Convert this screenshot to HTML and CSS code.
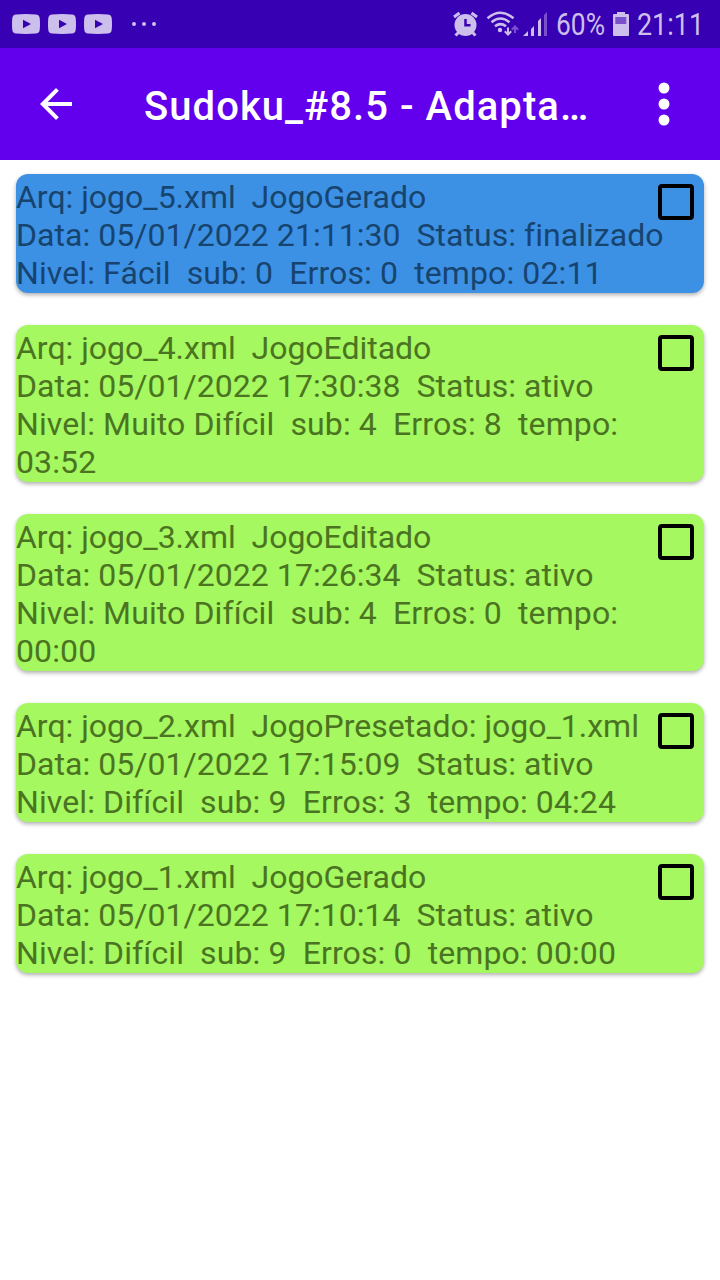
FILE: index.html
```html
<!DOCTYPE html>
<html lang="pt-BR">
<head>
<meta charset="utf-8">
<title>Sudoku_#8.5</title>
<link rel="stylesheet" href="styles.css">
</head>
<body>
<div class="status">
  <div class="notices">
    <svg class="video" viewBox="0 0 28 20"><path fill-rule="evenodd" d="M4 .4Q14-.4 24 .4 27.3.7 27.7 4 28.3 10 27.7 16 27.3 19.3 24 19.6 14 20.4 4 19.6.7 19.3.3 16-.3 10 .3 4 .7.7 4 .4ZM11 5.700v8.600l8-4.300Z"/></svg>
    <svg class="video" viewBox="0 0 28 20"><path fill-rule="evenodd" d="M4 .4Q14-.4 24 .4 27.3.7 27.7 4 28.3 10 27.7 16 27.3 19.3 24 19.6 14 20.4 4 19.6.7 19.3.3 16-.3 10 .3 4 .7.7 4 .4ZM11 5.700v8.600l8-4.300Z"/></svg>
    <svg class="video" viewBox="0 0 28 20"><path fill-rule="evenodd" d="M4 .4Q14-.4 24 .4 27.3.7 27.7 4 28.3 10 27.7 16 27.3 19.3 24 19.6 14 20.4 4 19.6.7 19.3.3 16-.3 10 .3 4 .7.7 4 .4ZM11 5.700v8.600l8-4.300Z"/></svg>
    <svg class="more" viewBox="0 0 26 4"><circle cx="2" cy="2" r="2"/><circle cx="12" cy="2" r="2"/><circle cx="22" cy="2" r="2"/></svg>
  </div>
  <svg class="indicators" viewBox="450 0 270 48">
    <g class="line">
      <path stroke-width="3" d="M454 17l5.500-4M477 17l-5.500-4M459 32l-3.500 3.500M472 32l3.500 3.500"/>
      <path stroke-width="2.500" d="M487.500 18.200Q500.500 7.200 513.500 18.200M491.500 22.300Q500.500 14.800 509.500 22.300M495 26.300Q500.500 22 506 26.300"/>
      <path stroke-width="2" d="M508 27.500V34M504.800 31.300l3.200 3.300 3.200-3.300"/>
      <path class="dim" stroke-width="2" d="M515 33V26.500M511.800 29.700l3.200-3.300 3.200 3.300"/>
    </g>
    <circle cx="465.500" cy="25" r="11"/>
    <path class="hand" d="M465.500 19v6.300h5"/>
    <circle cx="500" cy="30" r="2.200"/>
    <path d="M523 36l5-5v5ZM531 29l3-3v10h-3ZM538 21l3-3v18h-3Z"/>
    <path class="dim-fill" d="M544 15l3-3v24h-3Z"/>
    <path d="M617 12h8v2h3q1 0 1 1v20q0 1-1 1h-14q-1 0-1-1V15q0-1 1-1h3Z"/>
    <path class="level" d="M615.300 17h11v7h-11Z"/>
    <text x="556" y="35" textLength="49" lengthAdjust="spacingAndGlyphs">60%</text>
    <text x="637" y="35" textLength="67" lengthAdjust="spacingAndGlyphs">21:11</text>
  </svg>
</div>
<header class="bar">
  <svg class="back" viewBox="0 0 24 24"><path d="M20 11H7.830l5.590-5.590L12 4l-8 8 8 8 1.410-1.410L7.830 13H20v-2z"/></svg>
  <h1 class="title">Sudoku_#8.5 - Adapta…</h1>
  <svg class="menu" viewBox="0 0 12 44"><circle cx="6" cy="6" r="5.500"/><circle cx="6" cy="22" r="5.500"/><circle cx="6" cy="38" r="5.500"/></svg>
</header>
<main class="games">
  <article class="card finished"><p class="file">Arq: jogo_5.xml  JogoGerado</p><p class="date">Data: 05/01/2022 21:11:30  Status: finalizado</p><p class="level-info">Nivel: Fácil  sub: 0  Erros: 0  tempo: 02:11</p><span class="check"></span></article>
  <article class="card"><p class="file">Arq: jogo_4.xml  JogoEditado</p><p class="date">Data: 05/01/2022 17:30:38  Status: ativo</p><p class="level-info">Nivel: Muito Difícil  sub: 4  Erros: 8  tempo:
03:52</p><span class="check"></span></article>
  <article class="card"><p class="file">Arq: jogo_3.xml  JogoEditado</p><p class="date">Data: 05/01/2022 17:26:34  Status: ativo</p><p class="level-info">Nivel: Muito Difícil  sub: 4  Erros: 0  tempo:
00:00</p><span class="check"></span></article>
  <article class="card"><p class="file">Arq: jogo_2.xml  JogoPresetado: jogo_1.xml</p><p class="date">Data: 05/01/2022 17:15:09  Status: ativo</p><p class="level-info">Nivel: Difícil  sub: 9  Erros: 3  tempo: 04:24</p><span class="check"></span></article>
  <article class="card"><p class="file">Arq: jogo_1.xml  JogoGerado</p><p class="date">Data: 05/01/2022 17:10:14  Status: ativo</p><p class="level-info">Nivel: Difícil  sub: 9  Erros: 0  tempo: 00:00</p><span class="check"></span></article>
</main>
</body>
</html>
```
FILE: styles.css
```css
body {
  margin: 0;
  min-height: 1280px;
  background: #fff;
  font-family: Roboto, "Liberation Sans", sans-serif;
}
.status {
  display: flex;
  align-items: center;
  justify-content: space-between;
  height: 48px;
  background: #3700b3;
  fill: #cdbfec;
}
.notices {
  display: flex;
  align-items: center;
  gap: 8px;
  padding-left: 12px;
}
.video { width: 28px; height: 20px; }
.more { width: 26px; height: 4px; margin-left: 12px; }
.indicators { width: 270px; height: 48px; font-size: 31px; }
.line { fill: none; stroke: #cdbfec; }
.dim { stroke: #7a50cc; }
.dim-fill, .level { fill: #7a50cc; }
.hand { fill: none; stroke: #3700b3; stroke-width: 2.5; }
.bar {
  display: flex;
  align-items: center;
  height: 112px;
  background: #6200ee;
  color: #fff;
  fill: #fff;
}
.back { width: 48px; height: 48px; margin-left: 32px; }
.title {
  width: 450px;
  margin: 4px 0 0 64px;
  font-size: 40px;
  font-weight: 500;
  letter-spacing: 1.05px;
  white-space: nowrap;
}
.menu { width: 12px; height: 44px; margin-left: 64px; }
.games {
  display: flex;
  flex-direction: column;
  gap: 32px;
  padding: 14px 16px;
}
.card {
  position: relative;
  padding: 4px 0 1px;
  border-radius: 12px;
  background: #a5f85f;
  color: #4b7422;
  box-shadow: 0 2px 4px rgba(0, 0, 0, .32);
}
.finished { background: #3d91e4; color: #17446f; }
.card p {
  margin: 0;
  font-size: 32px;
  line-height: 38px;
  white-space: pre;
}
.card .file { letter-spacing: -.02px; }
.card .date { letter-spacing: .04px; }
.card .level-info { letter-spacing: .11px; }
.check {
  position: absolute;
  top: 10px;
  right: 10px;
  box-sizing: border-box;
  width: 36px;
  height: 36px;
  border: 4px solid #000;
  border-radius: 4px;
}
```
